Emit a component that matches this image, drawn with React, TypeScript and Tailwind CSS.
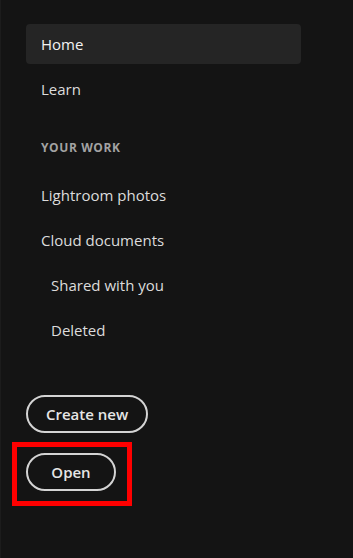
const font = { fontFamily: '"Open Sans", "Noto Sans", Arial, sans-serif' }

type Item = { label: string; indent?: boolean; active?: boolean }

const top: Item[] = [{ label: 'Home', active: true }, { label: 'Learn' }]
const work: Item[] = [
  { label: 'Lightroom photos' },
  { label: 'Cloud documents' },
  { label: 'Shared with you', indent: true },
  { label: 'Deleted', indent: true },
]

function NavItem({ item }: { item: Item }) {
  return (
    <div
      className={
        'flex h-10 items-center rounded-[4px] text-[15px] ' +
        (item.indent ? 'pl-[25px] ' : 'pl-[15px] ') +
        (item.active ? 'bg-[#252525] text-[#f2f2f2]' : 'text-[#dcdcdc]')
      }
    >
      {item.label}
    </div>
  )
}

export default function App() {
  return (
    <div
      className="relative h-[558px] w-[353px] overflow-hidden border-l border-[#1c1c1c] bg-[#141414]"
      style={font}
    >
      <div className="flex w-[300px] flex-col gap-[5px] pl-[25px] pt-6">
        {top.map((i) => (
          <NavItem key={i.label} item={i} />
        ))}
        <div className="h-[56px] pl-[15px] pt-[26px] text-[12px] font-bold leading-4 tracking-[0.6px] text-[#a3a3a3]">
          YOUR WORK
        </div>
        {work.map((i) => (
          <NavItem key={i.label} item={i} />
        ))}
      </div>

      <div className="mt-[45px] flex flex-col items-start gap-5 pl-[25px]">
        <button className="flex h-[38px] items-center rounded-full border-2 border-[#d4d4d4] px-[18px] text-[15px] font-semibold text-[#e6e6e6]">
          Create new
        </button>
        <button className="flex h-[38px] w-[90px] items-center justify-center rounded-full border-2 border-[#d4d4d4] text-[15px] font-semibold text-[#e6e6e6]">
          Open
        </button>
      </div>

      <div className="pointer-events-none absolute left-[11px] top-[442px] h-[64px] w-[120px] border-[5px] border-[#ff0000]" />
    </div>
  )
}
